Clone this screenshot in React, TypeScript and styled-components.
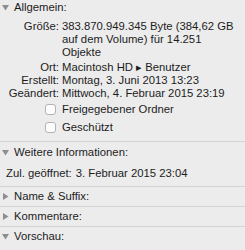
import React from "react";
import styled, { createGlobalStyle } from "styled-components";

const Global = createGlobalStyle`
  html, body { margin: 0; padding: 0; background: #ececec; }
  body { font-family: "Liberation Sans", Arial, sans-serif; font-size: 11.3px; color: #1c1c1c; }
`;

const Panel = styled.div`
  width: 245px;
  height: 250px;
  background: #ececec;
  overflow: hidden;
`;

const Section = styled.div<{ $last?: boolean }>`
  border-bottom: ${(p) => (p.$last ? "none" : "1px solid #d4d4d4")};
`;

const Header = styled.div<{ $h: number }>`
  display: flex;
  align-items: center;
  height: ${(p) => p.$h}px;
  padding-left: 2px;
  gap: 5px;
  line-height: 13px;
`;

const Tri = styled.svg`
  width: 7px;
  height: 7px;
  flex: none;
`;

const Body = styled.div<{ $top: number; $bottom: number }>`
  padding: ${(p) => p.$top}px 0 ${(p) => p.$bottom}px 0;
`;

const Row = styled.div<{ $gapAfter?: number }>`
  display: grid;
  grid-template-columns: 59px 1fr;
  column-gap: 3px;
  line-height: 13px;
  margin-bottom: ${(p) => p.$gapAfter ?? 0}px;
`;

const Label = styled.div`
  text-align: right;
  white-space: nowrap;
`;

const Value = styled.div`
  padding-right: 11px;
`;

const FreeRow = styled.div`
  display: flex;
  gap: 4px;
  padding-left: 6px;
  line-height: 13px;
  white-space: nowrap;
`;

const CheckRow = styled.label`
  display: flex;
  align-items: center;
  gap: 6px;
  padding-left: 45px;
  height: 18px;
`;

const Box = styled.span`
  box-sizing: border-box;
  width: 11px;
  height: 11px;
  border: 1px solid #b3b3b3;
  border-radius: 3px;
  background: #fdfdfd;
`;

const Triangle = ({ open }: { open: boolean }) => (
  <Tri viewBox="0 0 7 7">
    {open ? (
      <polygon points="0,1 7,1 3.5,6.5" fill="#8e8e8e" />
    ) : (
      <polygon points="1,0 6.5,3.5 1,7" fill="#8e8e8e" />
    )}
  </Tri>
);

export default function App() {
  return (
    <Panel>
      <Global />
      <Section>
        <Header $h={14}><Triangle open />Allgemein:</Header>
        <Body $top={6} $bottom={5}>
          <Row $gapAfter={2}><Label>Größe:</Label><Value>383.870.949.345 Byte (384,62 GB auf dem Volume) für 14.251 Objekte</Value></Row>
          <Row><Label>Ort:</Label><Value>Macintosh HD ▸ Benutzer</Value></Row>
          <Row><Label>Erstellt:</Label><Value>Montag, 3. Juni 2013 13:23</Value></Row>
          <Row><Label>Geändert:</Label><Value>Mittwoch, 4. Februar 2015 23:19</Value></Row>
          <CheckRow><Box />Freigegebener Ordner</CheckRow>
          <CheckRow><Box />Geschützt</CheckRow>
        </Body>
      </Section>
      <Section>
        <Header $h={21}><Triangle open />Weitere Informationen:</Header>
        <Body $top={4} $bottom={6}>
          <FreeRow><span>Zul. geöffnet:</span><span>3. Februar 2015 23:04</span></FreeRow>
        </Body>
      </Section>
      <Section>
        <Header $h={19}><Triangle open={false} />Name &amp; Suffix:</Header>
      </Section>
      <Section>
        <Header $h={19}><Triangle open={false} />Kommentare:</Header>
      </Section>
      <Section $last>
        <Header $h={19}><Triangle open />Vorschau:</Header>
      </Section>
    </Panel>
  );
}
